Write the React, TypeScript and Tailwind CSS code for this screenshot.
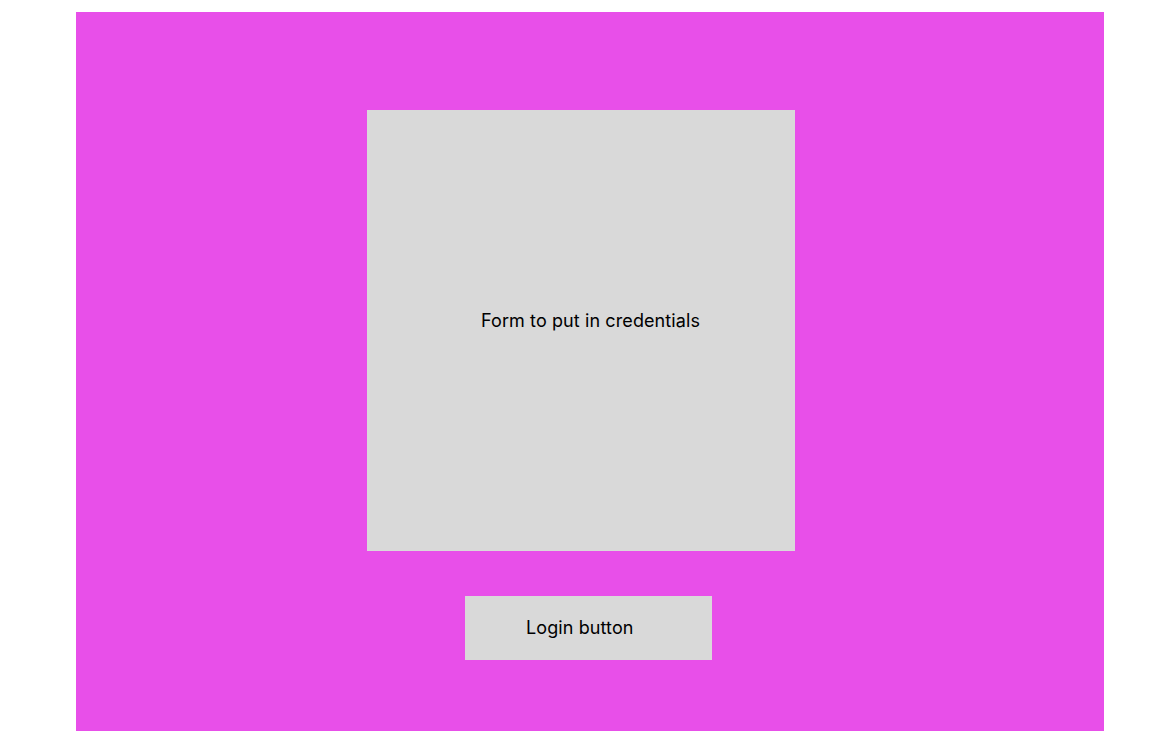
export default function App() {
  return (
    <div className="min-h-[742px] w-full bg-white pl-[76px] pt-[12px] font-['Inter',sans-serif] text-black">
      <div className="flex h-[719px] w-[1028px] flex-col bg-[#e84fe9] pt-[98px]">
        {/* Credentials form placeholder */}
        <div className="ml-[291px] flex h-[441px] w-[428px] bg-[#d9d9d9] pl-[114px] pt-[199px]">
          <span className="text-[18px] leading-[24px] tracking-[0.1px]">Form to put in credentials</span>
        </div>

        {/* Login button */}
        <button
          type="button"
          className="ml-[389px] mt-[45px] flex h-[64px] w-[247px] items-center bg-[#d9d9d9] pb-[2px] pl-[61px] text-[18px] tracking-[0.1px]"
        >
          Login button
        </button>
      </div>
    </div>
  )
}
